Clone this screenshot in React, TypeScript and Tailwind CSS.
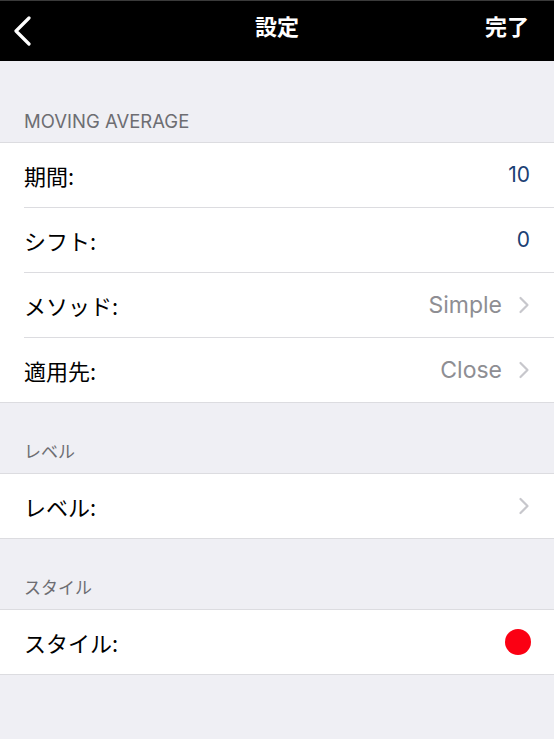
import { ReactNode } from 'react';

function Chevron() {
  return (
    <svg width="12" height="20" viewBox="0 0 12 20" className="ml-4 shrink-0">
      <path d="M2.5 3l7 7-7 7" fill="none" stroke="#c7c7cc" strokeWidth="2.2" strokeLinecap="round" strokeLinejoin="round" />
    </svg>
  );
}

type RowProps = {
  label: string;
  children?: ReactNode;
  last?: boolean;
};

function Row({ label, children, last }: RowProps) {
  return (
    <div className="pl-6 bg-white">
      <div
        className={`flex items-center justify-between pr-6 ${
          last ? 'h-[64px]' : 'h-[65px] border-b border-[#dcdce0]'
        }`}
      >
        <span className="text-[22px] text-black pt-[1px]">{label}</span>
        <div className="flex items-center">{children}</div>
      </div>
    </div>
  );
}

function SectionHeader({ title }: { title: string }) {
  return (
    <div className="h-[71px] flex items-end pl-6 pb-[10px] border-b border-[#dcdce0]">
      <span className="text-[#6d6d72] text-[17px]">{title}</span>
    </div>
  );
}

const latin = { fontFamily: 'Inter, "Noto Sans", sans-serif' };

export default function App() {
  return (
    <div
      className="w-[554px] h-[739px] bg-[#efeff4] overflow-hidden"
      style={{ fontFamily: '"Noto Sans CJK JP", "Noto Sans", sans-serif' }}
    >
      <div className="h-[61px] bg-black border-t border-[#3a3a3a] flex items-center justify-between px-[13px] pb-[3px] relative">
        <svg width="20" height="30" viewBox="0 0 20 30" className="mt-[2px]">
          <path d="M16 2L3 15l13 13" fill="none" stroke="white" strokeWidth="3.2" strokeLinecap="round" strokeLinejoin="round" />
        </svg>
        <span className="absolute left-1/2 -translate-x-1/2 top-[8px] text-white text-[22px] font-bold">設定</span>
        <span className="absolute right-[25px] top-[8px] text-white text-[22px] font-bold">完了</span>
      </div>

      <div className="h-[82px] flex items-end pl-6 pb-[6px] border-b border-[#dcdce0]">
        <span className="text-[#6d6d72] text-[18.5px]" style={latin}>MOVING AVERAGE</span>
      </div>
      <Row label="期間:">
        <span className="text-[21px] text-[#1b3f74]" style={latin}>10</span>
      </Row>
      <Row label="シフト:">
        <span className="text-[21px] text-[#1b3f74]" style={latin}>0</span>
      </Row>
      <Row label="メソッド:">
        <span className="text-[23px] text-[#8e8e93]" style={latin}>Simple</span>
        <Chevron />
      </Row>
      <div className="border-b border-[#dcdce0]">
        <Row label="適用先:" last>
          <span className="text-[23px] text-[#8e8e93]" style={latin}>Close</span>
          <Chevron />
        </Row>
      </div>

      <SectionHeader title="レベル" />
      <div className="border-b border-[#dcdce0]">
        <Row label="レベル:" last>
          <Chevron />
        </Row>
      </div>

      <SectionHeader title="スタイル" />
      <div className="border-b border-[#dcdce0]">
        <Row label="スタイル:" last>
          <div className="w-[26px] h-[26px] rounded-full bg-[#fb0013] mr-[-1px]" />
        </Row>
      </div>
    </div>
  );
}
